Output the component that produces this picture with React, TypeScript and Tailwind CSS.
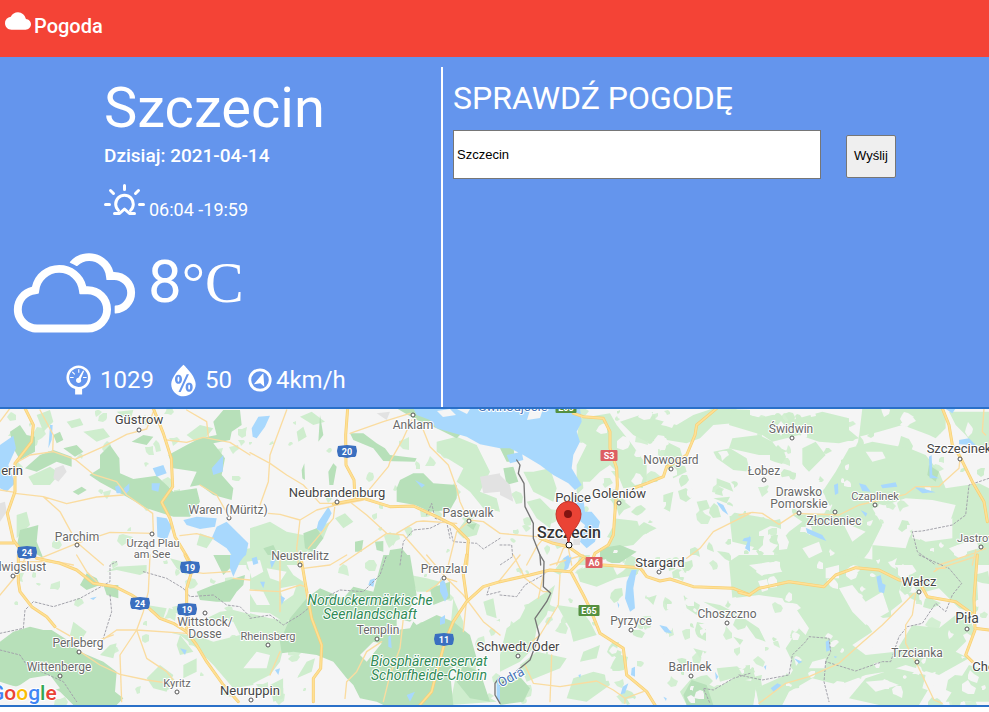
import { MdCloud } from "react-icons/md";
import { WiBarometer, WiCloudy, WiHumidity } from "react-icons/wi";

type TileData = {
  x: number;
  y: number;
  light?: string;
  dark?: string;
  land?: string;
  water?: string;
  urban?: string;
  minor?: string;
  major?: string;
  dashed?: string;
  border?: string;
};

const tiles: TileData[] = [
  {
    x: 0,
    y: 405,
    light:
      "M110 30L150 15L160 50L130 80ZM85 215L150 185L180 205L150 240L100 240ZM200 50L240 40L250 60L215 70ZM50 330L80 320L90 360L50 400ZM250 80L310 70L330 95L290 110ZM560 90L600 60L640 70L600 120ZM350 20L400 15L390 50ZM690 440L750 430L750 480L700 480ZM600 385L640 400L620 430L590 420Z",
    dark:
      "M30 80L60 60L80 90L105 95L105 140L60 165L40 130ZM75 190L120 150L160 135L215 155L215 185L170 170L110 200ZM300 150L330 120L358 160L360 205L400 222L470 212L505 245L520 260L590 250L600 290L570 335L520 335L440 310L380 275L300 232L268 210L300 190ZM505 150L560 120L600 100L650 90L640 50L670 15L720 15L725 60L695 80L690 105L640 115L675 160L665 210L700 250L695 285L640 270L600 240L570 245L590 200L520 190ZM60 375L115 360L110 410L130 460L80 430L50 425ZM218 260L245 245L260 255L235 270ZM395 110L430 90L460 95L440 120ZM160 90L180 80L190 105L170 115ZM190 130L230 120L250 140L225 155Z",
    water:
      "M0 120L40 92L48 130L25 180L45 235L20 260L0 250ZM458 190L490 180L500 205L470 215ZM345 245L358 240L365 265L350 265ZM372 250L388 235L388 255L375 270ZM470 335L500 340L515 365L500 405L472 395ZM550 345L590 335L650 340L645 365L600 372L560 360ZM650 365L680 350L745 415L738 450L710 470L680 430L635 400ZM635 190L670 150L668 200L640 210ZM150 60L158 60L155 105L145 130L148 90ZM455 235L480 235L475 260L455 255Z",
    urban: "M165 190L190 180L200 200L175 230L160 220ZM0 295L15 290L20 320L0 350Z",
    minor:
      "M0 50L30 10M45 175L90 150L160 140L225 163L310 125L380 88L440 72L460 20M120 15L160 90L158 140M225 163L280 208L350 230L380 270L458 325L460 380M45 265L130 275L200 296L290 276L370 270M130 275L180 320L230 412L310 480M120 460L230 415L330 382L460 385M500 105L560 112L610 97L690 112L750 150M560 15L620 50L625 95M540 392L590 386L640 400M600 240L650 270L690 340M0 255L45 262M60 470L170 470L220 480",
    major:
      "M75 10L100 60L95 110L45 175L45 260L22 325L40 405L62 435M460 10L490 85L514 160L518 245L485 292L510 340L525 395L558 450L575 480M0 414L40 414",
  },
  {
    x: 250,
    y: 405,
    light:
      "M150 35L185 20L225 50L190 60ZM560 110L620 95L680 120L720 200L690 260L740 280L750 320L700 310L660 260L620 230L640 190L560 140ZM0 370L60 350L110 380L160 390L180 420L150 480L0 480ZM620 380L650 340L690 360L680 390L640 400ZM255 340L285 325L310 350L280 370ZM190 375L240 350L220 400L185 440ZM140 80L160 65L170 95L145 110Z",
    dark:
      "M440 10L530 10L560 60L640 80L620 100L560 70L500 45ZM300 85L340 85L380 115L405 130L420 150L500 160L495 170L400 168L370 130L310 105ZM440 250L450 225L490 205L520 205L550 235L620 240L620 280L600 315L540 320L495 300L440 290ZM235 200L250 175L260 185L250 240L238 240ZM155 195L163 175L165 225L157 220ZM210 30L220 90L205 110ZM315 410L340 405L335 440L315 440ZM375 410L400 408L400 440L380 435ZM420 435L455 430L480 460L470 480L410 480ZM650 360L680 355L670 375ZM160 385L200 370L220 400L190 440L165 430ZM40 430L70 420L80 440L60 460Z",
    water:
      "M5 70L25 35L60 32L45 65L20 100L8 95ZM490 10L750 10L750 130L690 118L650 95L560 70L540 45L500 30ZM205 350L235 305L245 325L215 380L200 372ZM495 225L525 240L515 248Z",
    urban: "M690 215L750 205L750 260L700 265ZM380 25L420 20L410 45Z",
    minor:
      "M110 15L60 150L55 230L30 300M0 143L60 175L110 210L160 240L210 295L260 295M300 85L400 50L480 25M485 45L460 100L420 170L415 185L340 275M510 50L540 125L595 180L620 250L630 290L655 345M55 325L90 328L150 345L200 315L260 300L340 285M150 345L140 430L145 480M305 295L350 330L410 385L460 390L540 480M255 300L250 340L175 430M410 385L270 480M440 385L500 350L520 348L620 355M655 345L700 350L750 385M655 350L620 380L595 480",
    major:
      "M293 10L287 90L288 180L312 225L315 280M250 297L340 280L420 305L490 303L560 335L610 360L655 405L650 480",
    dashed: "M450 480L460 410L490 375L540 370L580 350M600 370L610 410L680 415L700 432L750 400M530 330L545 295L555 340L590 350L600 400",
  },
  {
    x: 500,
    y: 405,
    light:
      "M240 40L330 25L350 60L390 110L440 180L440 240L370 250L350 200L330 180L300 200L270 230L240 230L230 180L260 120L230 100ZM360 50L420 30L530 60L580 30L640 10L750 15L750 50L640 60L600 100L560 115L500 105L440 110L400 90ZM640 140L690 130L740 160L750 200L700 195L650 160ZM100 200L150 190L170 250L160 290L100 260L70 200ZM340 340L430 350L470 370L430 390L400 420L340 430L310 430L345 395ZM490 270L520 260L510 320L490 310ZM590 290L620 285L630 310L600 320ZM640 280L690 275L680 295ZM230 180L245 175L250 250L230 270ZM80 290L120 280L160 320L150 370L110 340ZM650 220L690 235L700 260L650 240ZM500 110L540 130L560 200L520 220L490 160Z",
    dark: "M10 190L40 185L55 230L20 240ZM0 130L40 120L45 170L20 170ZM300 430L360 420L410 440L350 480L300 460Z",
    water:
      "M0 10L240 10L245 50L230 80L240 110L220 150L215 190L245 240L225 255L205 235L160 210L120 180L70 150L30 130L0 130ZM20 150L65 140L70 165L30 175ZM210 290L250 280L255 320L275 320L300 350L285 410L260 430L240 410L255 360L230 340ZM650 290L670 300L685 330L668 318L655 300ZM190 460L205 450L215 470L195 480ZM735 430L750 390L750 440Z",
    urban: "M0 210L30 240L40 290L0 270ZM135 375L200 400L200 430L150 410ZM220 380L240 385L240 420L220 420Z",
    minor:
      "M0 385L110 395M250 450L150 480M80 480L110 425L130 400M170 480L190 430L208 420M560 460L600 430L640 380L700 350L750 325M205 430L215 480",
    major:
      "M220 25L250 35L310 40L330 80L330 130L350 190L352 240L345 320L340 390L325 420L285 445L270 480M650 10L590 60L585 90L560 150L530 170L500 185L490 215L440 235L400 250M120 400L160 415L205 425L240 450L270 465",
    border: "M50 165L60 180L55 205L72 235L75 305L100 355L100 400L120 450L122 480",
    dashed: "M0 420L35 420L38 455L0 480",
  },
  {
    x: 739,
    y: 405,
    light:
      "M-20 10L60 40L120 25L140 50L250 20L330 40L330 75L360 100L300 115L240 110L180 90L100 110L70 90L-30 60ZM-20 100L60 90L100 110L130 150L60 150L-30 130ZM190 130L230 110L260 150L210 200L190 180ZM370 10L620 10L620 70L590 100L570 90L490 60L420 80L360 95ZM330 130L400 110L510 130L560 150L600 200L620 250L720 235L750 250L750 480L400 480L400 420L500 430L510 400L530 360L630 360L650 300L580 285L500 280L440 300L400 310L430 360L390 440L360 480L180 480L100 440L150 380L190 350L160 330L270 325L280 300L250 260L290 200ZM-30 320L60 335L120 350L60 380L60 430L-20 410ZM630 20L750 20L750 140L710 130L680 90L650 60Z",
    dark: "M570 180L600 200L590 230L565 210Z",
    land: "M520 360L600 360L640 340L640 400L560 410L520 390ZM380 140L430 140L440 160L400 170ZM630 430L710 400L720 430L650 450ZM190 430L240 410L250 440L210 460ZM310 350L380 380L340 410Z",
    water:
      "M285 240L297 235L298 265L288 270ZM360 235L380 240L395 260L370 258ZM425 240L470 232L475 245L430 250ZM525 245L550 250L590 262L550 265ZM200 368L250 390L262 408L240 400L205 385ZM15 400L35 395L35 410L10 408ZM570 155L578 150L580 210L600 220L572 220ZM660 105L690 100L710 120L660 118ZM365 315L385 325L380 335ZM620 12L650 10L640 25Z",
    minor:
      "M0 330L40 322L70 325L120 358L170 325L300 330L360 300L500 268L530 245L600 245L610 235L660 190L663 160M735 10L730 80L740 90M600 480L690 450L740 430M710 435L700 480",
    major: "M610 10L630 60L640 120L663 155L700 230L735 290L745 350",
    dashed: "M750 220L720 230L690 240L680 330L640 360L550 378L520 380L535 440L590 480",
  },
  {
    x: 0,
    y: 555,
    light:
      "M500 230L540 240L590 280L640 330L700 400L760 390L760 180L700 165L660 170L620 190L700 200L720 240L640 260L600 245ZM440 150L500 160L490 190L450 170ZM320 50L350 45L420 60L440 50L440 30L350 35ZM220 200L260 230L240 260L210 240ZM480 330L520 360L500 410L460 400L440 370ZM330 270L350 265L340 310L300 300ZM550 330L590 310L590 350L550 370ZM540 240L580 290L540 300L530 270ZM510 10L550 20L560 60L530 40ZM735 0L760 0L760 60L740 40Z",
    dark:
      "M0 260L40 230L90 215L130 225L155 225L210 260L240 290L310 320L350 350L345 410L370 430L350 450L220 450L180 410L140 390L100 380L70 400L30 390L0 380ZM240 90L260 55L290 70L300 90L260 105ZM310 90L355 90L355 130L320 120ZM590 110L640 90L735 60L730 90L710 110L690 140L650 140L600 135ZM640 0L700 0L690 40L670 60Z",
    land: "M90 370L150 360L180 400L120 420L80 440L0 440L10 410L60 390Z",
    water: "M690 0L735 0L720 20L700 65L690 40ZM540 280L560 285L555 300ZM270 130L290 125L280 135Z",
    minor:
      "M230 0L260 50L295 85M240 290L300 330L360 358L440 375L530 388M340 240L300 255M300 260L350 225L410 225L560 235L570 215M410 225L430 170L445 110L450 0M410 225L360 300L365 440M410 225L440 310L500 350L530 388M0 120L50 60L80 0M170 220L240 260M570 50L610 55L690 50M700 70L750 75",
    major:
      "M55 0L55 80L60 110L95 155L140 185L165 215M110 10L180 25L230 45L280 85L345 95L395 120L425 140L480 190L520 205L560 230L590 270L620 320L670 390L715 440M575 50L560 100L560 220M555 0L565 20",
    dashed: "M0 235L70 220L75 165L100 140L160 155L240 130L330 80L330 30L350 20M430 50L500 70L550 100L570 125L640 120L680 150L720 155L750 185M0 285L60 300L80 330L190 380L230 440M330 120L335 170L310 250",
  },
  {
    x: 250,
    y: 555,
    light:
      "M0 0L90 0L130 60L160 80L180 180L100 200L60 175L0 170ZM0 175L60 190L130 200L150 240L100 280L90 320L60 360L0 390ZM480 60L530 70L570 80L550 110L500 110ZM610 130L640 200L640 240L600 230ZM610 250L680 320L670 400L740 440L600 450L620 350ZM700 140L730 130L740 190L710 180ZM60 390L100 370L100 430L70 440ZM170 320L195 310L185 350L140 370Z",
    dark:
      "M400 0L480 0L490 60L500 120L470 180L500 210L560 180L610 200L660 240L680 310L620 320L600 350L610 450L400 450L380 440L330 430L310 390L290 370L250 320L200 300L130 290L95 295L90 260L120 190L170 130L210 100L280 130L310 95L370 110ZM640 330L690 350L720 440L660 430L620 380ZM540 100L600 80L600 130L550 150Z",
    land: "M370 260L395 265L350 320L330 300ZM440 190L480 200L500 180L480 220L440 225ZM100 340L150 330L140 380L100 400ZM-10 20L30 15L40 50L5 70ZM50 40L110 50L90 80L60 70ZM-10 100L40 110L60 150L20 150ZM90 100L140 90L130 120L100 140ZM20 290L60 300L50 340L-20 340Z",
    water:
      "M360 75L375 70L370 95L355 90ZM570 70L585 80L595 120L585 140L570 110ZM5 10L20 5L25 25L10 30ZM60 20L80 10L65 40ZM90 120L105 130L95 150ZM30 80L45 80L40 100ZM570 190L585 180L585 205L570 210ZM415 245L422 240L425 280L415 275ZM470 420L495 410L480 440ZM740 380L750 370L750 440L740 430ZM75 345L90 340L85 360Z",
    minor:
      "M90 0L90 170M160 40L240 30L290 0M0 105L90 110L150 90L165 95M395 260L350 290L320 350L290 380L285 430M460 190L450 280L420 360L400 440M620 80L590 70L530 0M590 70L640 120L700 200L750 240M580 70L560 90L530 110M650 130L640 230M90 290L60 360",
    major:
      "M155 20L165 80L185 190L215 270L212 340L190 370L190 440M750 80L700 95L650 140L610 200L585 260L555 370L545 410L510 450M650 0L640 60L650 130",
    dashed: "M0 190L60 180L100 210L150 180L200 140L270 105L340 110L390 60L410 0M750 110L710 120L720 90",
    border: "M750 365L735 385L735 420L750 445",
  },
  {
    x: 500,
    y: 555,
    light:
      "M20 220L60 190L80 150L140 110L165 90L140 180L110 220L100 280L60 320L0 350L0 300ZM60 330L110 290L200 310L180 340L80 380ZM270 30L350 35L420 40L410 60L350 70L290 95L240 80L230 50ZM170 150L240 160L270 200L290 240L220 260L210 220ZM250 290L300 270L290 310L240 320ZM220 370L280 350L320 360L330 390L260 440L200 430ZM340 280L365 290L360 310L345 305ZM550 120L600 150L590 180L560 160ZM440 130L470 120L460 150ZM610 140L700 190L720 180L660 150ZM700 245L730 255L720 270ZM580 280L620 290L600 310ZM540 410L575 370L610 380L650 400L700 370L770 380L760 450L560 450ZM650 340L750 330L750 355L660 380ZM240 0L270 0L265 30L230 30ZM190 10L210 20L180 60L160 50Z",
    dark: "M0 370L60 365L90 400L70 440L0 450ZM550 420L575 375L620 390L640 450L560 450Z",
    water:
      "M395 45L410 45L400 100L405 160L390 170L375 130L380 80ZM478 210L500 215L516 235L495 232ZM395 340L405 335L405 365L393 360ZM368 395L385 385L375 415L362 418ZM352 140L358 150L355 160ZM200 10L215 5L205 40L190 50ZM490 425L500 430L498 438ZM645 350L655 365L648 375ZM235 360L243 358L240 370Z",
    minor:
      "M40 0L75 70L130 110L150 110M180 60L175 150L120 240L95 260M75 330L100 385L180 395L290 378L340 405L375 430L430 410M155 300L150 440M130 60L115 130M375 430L375 445M60 0L0 75",
    major:
      "M0 80L90 60L150 45L210 50L230 30L250 10M215 55L250 120L270 160L300 235L370 280L380 360L440 410L465 450M310 30L420 38L440 65L480 78L510 72L580 95L700 100L750 120M410 30L430 50",
    border: "M120 0L132 20L130 95L152 115L140 140L105 190L118 240L90 315L60 340L0 390",
    dashed: "M0 120L50 125L75 90L130 60L140 50M750 355L700 370L640 405L610 400L630 445",
  },
  {
    x: 739,
    y: 555,
    light:
      "M-30 20L0 0L180 0L230 30L320 0L440 20L500 50L480 110L490 140L440 180L410 150L380 200L400 230L340 270L380 300L470 290L520 210L600 220L650 180L680 170L710 230L650 290L690 310L600 360L500 330L440 350L380 360L300 390L220 370L150 410L130 450L60 450L50 400L140 360L160 320L140 280L180 220L130 130L60 120L-20 130ZM500 0L710 0L720 180L660 160L600 100L560 110L540 60ZM690 330L750 350L750 440L620 440ZM330 430L380 370L470 340L560 360L570 400L540 450L420 450ZM-20 360L40 340L50 370L-10 380ZM0 180L60 220L80 260L50 250Z",
    land: "M120 140L160 145L210 220L200 240L150 190ZM300 100L340 90L380 140L430 110L450 170L380 210L340 170ZM220 320L260 310L260 340L210 340ZM260 40L300 30L300 70L260 70ZM400 230L450 200L440 250L400 280ZM560 360L590 350L580 410L550 400ZM380 380L440 375L480 390L410 410ZM30 30L110 20L130 50L70 60Z",
    water:
      "M412 65L425 60L430 85L440 90L435 115L420 110ZM260 260L270 255L275 285L262 290ZM95 400L115 385L127 390L105 412ZM165 310L190 320L180 326ZM285 303L295 305L288 310ZM75 335L82 330L80 345Z",
    minor:
      "M60 445L140 385L210 365L300 325L350 280L430 210L500 140L525 115M530 115L520 180L500 210L500 265L535 330L585 435L610 445M585 50L600 40L710 5M590 40L620 40",
    major:
      "M0 112L30 120L60 100L150 80L255 95L290 60L350 38L420 45L480 75L540 80L565 125L650 140L705 180M715 0L705 130L708 220L750 225M708 225L680 300L700 320",
    dashed: "M0 360L70 375L150 360L160 300L200 260L210 245L270 250L275 290L260 320L350 348L430 320L455 320L480 245L505 215L550 205L590 145L620 170L640 120L668 85L630 40L540 0M260 320L255 380L270 440",
  },
];

/* Small woodland patches, spread by a fixed linear congruential sequence. */
const makePatches = (count: number, x0: number, x1: number, seed: number, radius: number) => {
  let state = seed;
  const next = () => {
    state = (state * 1103515245 + 12345) % 2147483648;
    return state / 2147483648;
  };
  let d = "";
  for (let i = 0; i < count; i++) {
    const cx = x0 + next() * (x1 - x0);
    const cy = 409 + next() * 296;
    const size = 2 + next() * radius;
    for (let k = 0; k < 7; k++) {
      const angle = (k / 7) * Math.PI * 2;
      const r = size * (0.4 + next() * 0.8);
      d += `${k ? "L" : "M"}${Math.round(cx + Math.cos(angle) * r)} ${Math.round(cy + Math.sin(angle) * r)}`;
    }
    d += "Z";
  }
  return d;
};

const woods = makePatches(260, 0, 989, 77, 6);
const eastWoods = makePatches(150, 590, 989, 1234, 9);
const clearings = makePatches(170, 600, 989, 991, 6);

type Label = { t: string; x: number; y: number; s?: number };
const towns: Label[] = [
  { t: "Güstrow", x: 139, y: 424, s: 13 },
  { t: "erin", x: 12, y: 475, s: 13 },
  { t: "Parchim", x: 77, y: 541 },
  { t: "Urząd Plau", x: 153, y: 547, s: 11 },
  { t: "am See", x: 152, y: 558, s: 11 },
  { t: "Waren (Müritz)", x: 228, y: 514 },
  { t: "Neubrandenburg", x: 337, y: 497, s: 13 },
  { t: "Anklam", x: 413, y: 429 },
  { t: "Pasewalk", x: 468, y: 517 },
  { t: "Neustrelitz", x: 300, y: 560 },
  { t: "Prenzlau", x: 444, y: 573 },
  { t: "Police", x: 573, y: 502, s: 13 },
  { t: "Goleniów", x: 619, y: 498, s: 13 },
  { t: "Nowogard", x: 671, y: 464 },
  { t: "Świdwin", x: 791, y: 433 },
  { t: "Łobez", x: 764, y: 475 },
  { t: "Drawsko", x: 799, y: 496 },
  { t: "Pomorskie", x: 799, y: 508 },
  { t: "Czaplinek", x: 875, y: 500, s: 11 },
  { t: "Złocieniec", x: 834, y: 525 },
  { t: "Szczecinek", x: 959, y: 453, s: 13 },
  { t: "Jastrowie", x: 981, y: 542, s: 11 },
  { t: "Stargard", x: 660, y: 567, s: 13 },
  { t: "Pyrzyce", x: 631, y: 625 },
  { t: "Choszczno", x: 727, y: 618 },
  { t: "Barlinek", x: 690, y: 671 },
  { t: "Wałcz", x: 919, y: 586, s: 13 },
  { t: "Piła", x: 967, y: 623, s: 14 },
  { t: "Trzcianka", x: 917, y: 657 },
  { t: "Chodzież", x: 999, y: 671, s: 13 },
  { t: "Schwedt/Oder", x: 518, y: 651, s: 13 },
  { t: "Templin", x: 378, y: 634 },
  { t: "Rheinsberg", x: 268, y: 640, s: 11 },
  { t: "Neuruppin", x: 250, y: 695, s: 13 },
  { t: "Kyritz", x: 177, y: 687, s: 11 },
  { t: "Wittstock/", x: 205, y: 626 },
  { t: "Dosse", x: 205, y: 638 },
  { t: "Perleberg", x: 78, y: 647 },
  { t: "Wittenberge", x: 59, y: 671 },
  { t: "Ludwigslust", x: 14, y: 571 },
];

const dots: [number, number][] = [
  [139, 430], [77, 545], [152, 534], [229, 518], [337, 502], [413, 415], [469, 521], [300, 565],
  [444, 578], [619, 503], [671, 469], [792, 438], [764, 480], [799, 513], [835, 512], [875, 505],
  [960, 459], [981, 547], [659, 572], [631, 630], [727, 623], [691, 676], [919, 592], [967, 629],
  [917, 662], [518, 656], [377, 639], [268, 645], [251, 700], [177, 692], [205, 613], [79, 652],
  [60, 676], [13, 576],
];

const shields = [
  { t: "20", x: 347, y: 451, c: "#3a6fc0" },
  { t: "24", x: 27, y: 552, c: "#3a6fc0" },
  { t: "19", x: 190, y: 567, c: "#3a6fc0" },
  { t: "24", x: 140, y: 603, c: "#3a6fc0" },
  { t: "19", x: 187, y: 609, c: "#3a6fc0" },
  { t: "11", x: 444, y: 639, c: "#3a6fc0" },
  { t: "S3", x: 609, y: 455, c: "#dd5e62" },
  { t: "A6", x: 594, y: 562, c: "#dd5e62" },
  { t: "E65", x: 589, y: 610, c: "#559040" },
  { t: "E65", x: 566, y: 407, c: "#559040" },
];

const place = (tile: TileData) => `translate(${tile.x} ${tile.y}) scale(0.33333)`;

function Ground({ tile }: { tile: TileData }) {
  return (
    <g transform={place(tile)}>
      <path d={tile.light} fill="#ceedcd" />
      <path d={tile.dark} fill="#b7e0b9" />
      <path d={tile.land} fill="#f5f5f5" />
      <path d={tile.urban} fill="#e2e2e2" />
    </g>
  );
}

function Roads({ tile }: { tile: TileData }) {
  return (
    <g transform={place(tile)} fill="none" strokeLinejoin="round" strokeLinecap="round">
      <path d={tile.water} fill="#a8d8fd" />
      <path d={tile.dashed} stroke="#a3a3ab" strokeWidth="3" strokeDasharray="6 6" />
      <path d={tile.minor} stroke="#fadca0" strokeWidth="4" />
      <path d={tile.major} stroke="#f8cf74" strokeWidth="9" />
      <path d={tile.major} stroke="#fee095" strokeWidth="5" />
      <path d={tile.border} stroke="#757575" strokeWidth="4" />
    </g>
  );
}

function WeatherMap() {
  return (
    <svg
      viewBox="0 409 989 296"
      preserveAspectRatio="xMidYMid slice"
      className="block h-[296px] w-full bg-[#f5f5f5] font-[Roboto,sans-serif]"
      role="img"
      aria-label="Mapa: Szczecin"
    >
      <path d={woods} fill="#d3efd2" />
      <path d={eastWoods} fill="#ceedcd" />
      {tiles.map((tile) => (
        <Ground key={`${tile.x}-${tile.y}`} tile={tile} />
      ))}
      <path d={clearings} fill="#f5f5f5" />
      {tiles.map((tile) => (
        <Roads key={`${tile.x}-${tile.y}`} tile={tile} />
      ))}
      <path d="M530 410L543 409L540 418L527 420ZM437 411L450 409L456 415L443 417ZM457 409L470 409L467 414Z" fill="#f5f5f5" />
      {shields.map((s, i) => {
        const w = s.t.length > 2 ? 21 : 17;
        return (
          <g key={i}>
            <rect x={s.x - w / 2} y={s.y - 5} width={w} height="11" rx="1" fill={s.c} />
            {s.c === "#3a6fc0" && (
              <path
                d={`M${s.x - 9} ${s.y - 5}L${s.x - 10} ${s.y}L${s.x - 9} ${s.y + 5}L${s.x} ${s.y + 7}L${s.x + 9} ${s.y + 5}L${s.x + 10} ${s.y}L${s.x + 9} ${s.y - 5}L${s.x} ${s.y - 6}Z`}
                fill={s.c}
              />
            )}
            <text x={s.x} y={s.y + 4} fontSize="9" fontWeight="700" fill="#fff" textAnchor="middle">
              {s.t}
            </text>
          </g>
        );
      })}
      {dots.map(([x, y]) => (
        <circle key={`${x}-${y}`} cx={x} cy={y} r="2" fill="#fff" stroke="#555" strokeWidth="1" />
      ))}
      <g textAnchor="middle" stroke="#fff" strokeWidth="2" strokeLinejoin="round" paintOrder="stroke">
        {towns.map((l) => (
          <text key={l.t} x={l.x} y={l.y} fontSize={l.s ?? 12} fill={(l.s ?? 12) > 12 ? "#444" : "#686868"}>
            {l.t}
          </text>
        ))}
        <g fontStyle="italic" fontSize="14" fill="#2f8a55">
          <text x="370" y="605">Norduckermärkische</text>
          <text x="370" y="619">Seenlandschaft</text>
          <text x="429" y="666">Biosphärenreservat</text>
          <text x="429" y="680">Schorfheide-Chorin</text>
        </g>
        <text x="513" y="411" fontSize="13" fill="#4a76b8">Świnoujście</text>
        <text x="513" y="681" fontSize="13" fill="#4a76b8" transform="rotate(-28 513 681)">Odra</text>
        <text x="569" y="538" fontSize="16" fontWeight="500" fill="#333">Szczecin</text>
      </g>
      <circle cx="569" cy="545" r="3" fill="#fff" stroke="#111" strokeWidth="1" />
      <path
        d="M568 542C567 530 556 526 556 514A12 12 0 0 1 581 514C581 526 570 530 569 542Z"
        fill="#ea4335"
        stroke="#c5352b"
        strokeWidth="1"
      />
      <circle cx="568" cy="514" r="4" fill="#811411" />
      <text x="-10" y="700" fontSize="21" fontWeight="500" stroke="#fff" strokeWidth="2" paintOrder="stroke">
        <tspan fill="#4285f4">G</tspan>
        <tspan fill="#ea4335">o</tspan>
        <tspan fill="#fbbc04">o</tspan>
        <tspan fill="#4285f4">g</tspan>
        <tspan fill="#34a853">l</tspan>
        <tspan fill="#ea4335">e</tspan>
      </text>
    </svg>
  );
}

function SunriseIcon() {
  return (
    <svg
      viewBox="0 0 41 32"
      className="h-8 w-[41px]"
      fill="none"
      stroke="currentColor"
      strokeWidth="3"
      strokeLinecap="round"
      strokeLinejoin="round"
      aria-hidden="true"
    >
      <path d="M20.500 1.500V5.500M6.500 6.500L9.500 9.500M34.500 6.500L31.500 9.500M1.500 20.500H5.500M35.500 20.500H39.500" />
      <path d="M14.500 26.500A8.800 8.800 0 1 1 26.500 26.500" />
      <path d="M10.500 29.500H15.500L20.500 25L25.500 29.500H30.500" />
    </svg>
  );
}

function WindIcon() {
  return (
    <svg viewBox="0 0 24 24" className="size-6" aria-hidden="true">
      <circle cx="12" cy="12" r="10.200" fill="none" stroke="currentColor" strokeWidth="2.800" />
      <path d="M15.300 5L16.300 18.800L12.300 15.300L5.800 16.300Z" fill="currentColor" />
    </svg>
  );
}

export default function App() {
  return (
    <div className="bg-white font-[Roboto,sans-serif] text-white">
      <header className="flex h-[57px] items-start gap-[3px] bg-[#f44336] px-[5px] pt-2">
        <MdCloud size={26} />
        <h1 className="pt-1 text-xl font-medium leading-7">Pogoda</h1>
      </header>

      <main className="grid grid-cols-[443fr_546fr] bg-[#6495ed] pt-[10px]">
        <section className="min-h-[340px] border-r-2 border-white">
          <div className="pl-[104px] pt-[9px]">
            <h2 className="text-[56px] leading-[64px]">Szczecin</h2>
            <p className="text-[19px] font-medium leading-8">Dzisiaj: 2021-04-14</p>
            <div className="flex h-[55px] items-start gap-1 pt-3">
              <SunriseIcon />
              <p className="pt-3 text-lg leading-7">06:04 -19:59</p>
            </div>
          </div>
          <div className="flex h-[129px] items-start gap-2 pl-[9px] pt-[19px]">
            <WiCloudy viewBox="3 6 24 17" className="h-[93px] w-[131px]" />
            <p className="text-[60px] leading-[72px]">
              8<span className="font-['Liberation_Serif',serif] text-[58px]">°C</span>
            </p>
          </div>
          <div className="flex h-12 items-center gap-4 pl-[65px] text-2xl">
            <span className="flex items-center gap-2">
              <WiBarometer viewBox="7 5 16 20" className="h-[33px] w-[27px]" />
              1029
            </span>
            <span className="flex items-center gap-2">
              <WiHumidity viewBox="7 5 16 20" className="h-[33px] w-[27px]" />
              50
            </span>
            <span className="flex items-center gap-1">
              <WindIcon />
              4km/h
            </span>
          </div>
        </section>

        <section className="pl-[10px] pt-3">
          <h2 className="text-[32px] leading-[38px]">
            <label htmlFor="city">SPRAWDŹ POGODĘ</label>
          </h2>
          <form className="flex items-center pt-[13px]" onSubmit={(e) => e.preventDefault()}>
            <input
              id="city"
              type="text"
              defaultValue="Szczecin"
              className="h-[49px] w-[368px] border border-[#767676] bg-white px-[3px] font-['Liberation_Sans',sans-serif] text-[13px] text-black"
            />
            <button
              type="submit"
              className="ml-[25px] mt-[3px] h-[43px] w-[50px] rounded-[2px] border border-[#767676] bg-[#efefef] font-['Liberation_Sans',sans-serif] text-[13px] text-black"
            >
              Wyślij
            </button>
          </form>
        </section>
      </main>

      <section className="border-y-2 border-[#2a70c8]">
        <WeatherMap />
      </section>
    </div>
  );
}
